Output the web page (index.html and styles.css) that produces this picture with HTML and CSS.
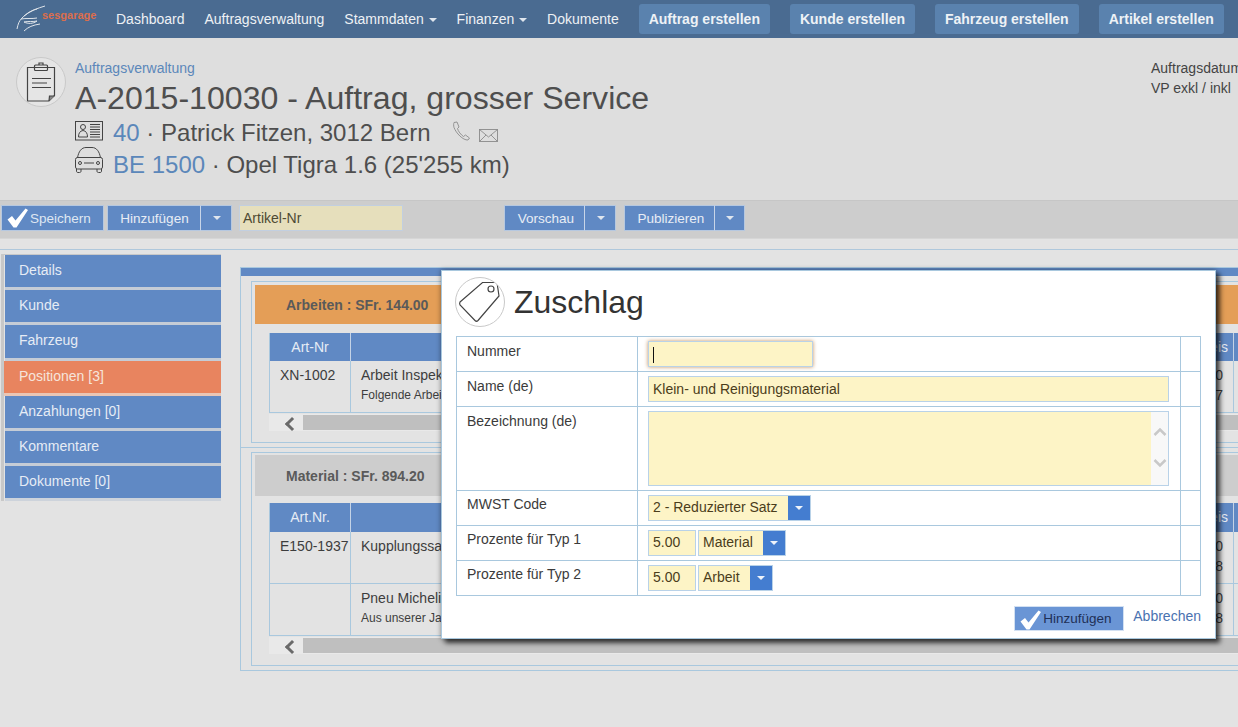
FILE: index.html
```html
<!DOCTYPE html>
<html lang="de">
<head>
<meta charset="utf-8">
<title>Zuschlag</title>
<link rel="stylesheet" href="styles.css">
</head>
<body>
<nav class="nav">
  <a class="logo">
    <svg class="logo-mark" width="46" height="32" viewBox="0 0 46 32" fill="none" stroke="#dfe4ea" stroke-width="1"><path d="M29 2C22 4 14 7 8 12"/><path d="M21 5C16 6 11 9 6 14C3 17 2 20 1 25"/><path d="M5 15C10 14 16 15 21 14"/><path d="M8 18C12 17 17 18 21 17C17 20 12 20 8 18Z"/><path d="M8 27C12 23 17 21 24 20"/></svg>
    <span class="logo-text">sesgarage</span>
  </a>
  <a class="nav-link">Dashboard</a>
  <a class="nav-link">Auftragsverwaltung</a>
  <a class="nav-link">Stammdaten <i class="caret"></i></a>
  <a class="nav-link">Finanzen <i class="caret"></i></a>
  <a class="nav-link">Dokumente</a>
  <a class="nav-btn first">Auftrag erstellen</a>
  <a class="nav-btn">Kunde erstellen</a>
  <a class="nav-btn">Fahrzeug erstellen</a>
  <a class="nav-btn">Artikel erstellen</a>
</nav>

<header class="head">
  <div class="round-icon">
    <svg width="50" height="50" viewBox="0 0 50 50" fill="none" stroke="#444" stroke-width="1.200"><path d="M11.500 10.500H38.500V38.500L33 44H11.500Z"/><rect x="18.500" y="8" width="13" height="5.500" rx="1"/><path d="M23 8V6H27V8"/><path d="M16 21.500H35M16 26H31M16 30.500H35"/><path d="M33 44L33.500 39H38.500" fill="#888"/></svg>
  </div>
  <div class="head-main">
    <a class="crumb">Auftragsverwaltung</a>
    <h1 class="title">A-2015-10030 - Auftrag, grosser Service</h1>
    <div class="sub sub-a">
      <svg class="sub-icon id" width="28" height="20" viewBox="0 0 28 20" fill="none" stroke="#444"><rect x="0.500" y="0.500" width="27" height="18.500"/><circle cx="8" cy="6" r="2.500"/><path d="M3.500 16C3.500 12 5 10 8 9.500C11 10 12.500 12 12.500 16Z"/><path d="M15 3.500H25M15 6H25M15 8.500H25M15 11H25M15 13.500H25M15 16H25"/></svg>
      <a class="num">40</a><span> · Patrick Fitzen, 3012 Bern</span>
      <svg class="phone" width="20" height="20" viewBox="0 0 20 20" fill="none" stroke="#8b8b8b" stroke-width="0.9"><path d="M3 1.500L6 1L8 6L6.500 7.500C7 10 10 14 12.500 15.500L14.500 14L18.500 17L17 19C12 19.500 5 12 3 6.500C2.500 4.500 2.500 3 3 1.500Z"/></svg>
      <svg class="mail" width="19" height="13" viewBox="0 0 19 13" fill="none" stroke="#8b8b8b" stroke-width="0.9"><rect x="0.500" y="0.500" width="18" height="12"/><path d="M0.500 0.500L9.500 8L18.500 0.500M0.500 12.500L7 6M18.500 12.500L12 6"/></svg>
    </div>
    <div class="sub sub-b">
      <svg class="sub-icon car" width="28" height="26" viewBox="0 0 28 26" fill="none" stroke="#444"><path d="M2.500 11C3.500 4.500 6.500 0.500 11 0.500H17C21.500 0.500 24.500 4.500 25.500 11"/><rect x="0.500" y="10.500" width="27" height="11.500" rx="2"/><path d="M1.500 22V24C1.500 25 2 25.500 3 25.500H4.500C5.500 25.500 6 25 6 24V22M22 22V24C22 25 22.500 25.500 23.500 25.500H25C26 25.500 26.500 25 26.500 24V22"/><circle cx="5" cy="16" r="1.500"/><circle cx="23" cy="16" r="1.500"/><path d="M9 16H19"/></svg>
      <a class="num">BE 1500</a><span> · Opel Tigra 1.6 (25'255 km)</span>
    </div>
  </div>
  <div class="head-side">
    <div>Auftragsdatum</div>
    <div>VP exkl / inkl</div>
  </div>
</header>

<div class="toolbar">
  <a class="tbtn save">
    <svg width="22" height="20" viewBox="0 0 22 20"><path d="M0.500 11.500L5 8L8.500 12.500L18.500 0.500L21 2L9.500 19.500H6.500Z" fill="#fff"/></svg>
    Speichern
  </a>
  <div class="split add"><a class="tbtn main">Hinzufügen</a><a class="tbtn drop"><i class="caret"></i></a></div>
  <div class="art-input">Artikel-Nr</div>
  <div class="split vorschau"><a class="tbtn main">Vorschau</a><a class="tbtn drop"><i class="caret"></i></a></div>
  <div class="split publ"><a class="tbtn main">Publizieren</a><a class="tbtn drop"><i class="caret"></i></a></div>
</div>

<main class="content">
  <aside class="side">
    <a class="side-item">Details</a>
    <a class="side-item">Kunde</a>
    <a class="side-item">Fahrzeug</a>
    <a class="side-item active">Positionen [3]</a>
    <a class="side-item">Anzahlungen [0]</a>
    <a class="side-item">Kommentare</a>
    <a class="side-item">Dokumente [0]</a>
  </aside>
  <section class="panel">
    <div class="panel-bar"></div>
    <div class="group">
      <div class="group-box">
        <div class="group-head orange">Arbeiten : SFr. 144.00</div>
        <div class="tbl">
          <div class="row hrow"><div class="c c1">Art-Nr</div><div class="c c2"></div><div class="c c3">Preis</div><div class="c c4"></div></div>
          <div class="row brow"><div class="c c1">XN-1002</div><div class="c c2"><div>Arbeit Inspektion</div><small>Folgende Arbeiten</small></div><div class="c c3"><div>0</div><div>7</div></div><div class="c c4"></div></div>
        </div>
        <div class="hscroll"><span class="chev"></span><span class="thumb"></span></div>
      </div>
    </div>
    <div class="group second">
      <div class="group-box">
        <div class="group-head grey">Material : SFr. 894.20</div>
        <div class="tbl">
          <div class="row hrow"><div class="c c1">Art.Nr.</div><div class="c c2"></div><div class="c c3">Preis</div><div class="c c4"></div></div>
          <div class="row brow"><div class="c c1">E150-1937</div><div class="c c2"><div>Kupplungssatz</div></div><div class="c c3"><div>0</div><div>8</div></div><div class="c c4"></div></div>
          <div class="row brow"><div class="c c1"></div><div class="c c2"><div>Pneu Michelin</div><small>Aus unserer Jahresaktion</small></div><div class="c c3"><div>0</div><div>8</div></div><div class="c c4"></div></div>
        </div>
        <div class="hscroll"><span class="chev"></span><span class="thumb"></span></div>
      </div>
    </div>
  </section>
</main>

<div class="modal">
  <div class="modal-head">
    <div class="round-icon tag">
      <svg width="50" height="50" viewBox="0 0 50 50" fill="none" stroke="#444" stroke-width="1.200"><path d="M5 25L27.500 5.500L42 5.500L44 19L23 43.500C22 44.500 21 44.500 20 43.500L5 28C4.500 27 4.500 26 5 25Z"/><circle cx="36" cy="12" r="3"/></svg>
    </div>
    <h2 class="modal-title">Zuschlag</h2>
  </div>
  <div class="form">
    <div class="f-row r35"><div class="lab">Nummer</div><div class="val"><div class="inp focus"><i class="cursor"></i></div></div><div class="end"></div></div>
    <div class="f-row r35"><div class="lab">Name (de)</div><div class="val"><div class="inp wide">Klein- und Reinigungsmaterial</div></div><div class="end"></div></div>
    <div class="f-row r84"><div class="lab">Bezeichnung (de)</div><div class="val"><div class="area"><div class="area-fill"></div><div class="area-scroll"><svg width="14" height="42" viewBox="0 0 14 42" fill="none" stroke="#c8c8c8" stroke-width="2.500"><path d="M1.500 8L7 2.500L12.500 8M1.500 33L7 38.500L12.500 33"/></svg></div></div></div><div class="end"></div></div>
    <div class="f-row r35 tight"><div class="lab">MWST Code</div><div class="val"><div class="sel s-mwst"><span class="sel-txt">2 - Reduzierter Satz</span><span class="sel-btn"><i class="caret"></i></span></div></div><div class="end"></div></div>
    <div class="f-row r35 tight"><div class="lab">Prozente für Typ 1</div><div class="val"><div class="inp num-inp">5.00</div><div class="sel s-mat"><span class="sel-txt">Material</span><span class="sel-btn"><i class="caret"></i></span></div></div><div class="end"></div></div>
    <div class="f-row r35 tight last"><div class="lab">Prozente für Typ 2</div><div class="val"><div class="inp num-inp">5.00</div><div class="sel s-arb"><span class="sel-txt">Arbeit</span><span class="sel-btn"><i class="caret"></i></span></div></div><div class="end"></div></div>
  </div>
  <div class="modal-foot">
    <a class="add-btn">
      <svg width="22" height="20" viewBox="0 0 22 20"><path d="M0.500 11.500L5 8L8.500 12.500L18.500 0.500L21 2L9.500 19.500H6.500Z" fill="#fff"/></svg>
      Hinzufügen
    </a>
    <a class="cancel">Abbrechen</a>
  </div>
</div>
</body>
</html>
```
FILE: styles.css
```css
* { box-sizing: border-box; }
html, body { margin: 0; height: 727px; overflow: hidden; }
body { position: relative; background: #e3e3e3; font-family: "Liberation Sans", Arial, sans-serif; font-size: 14px; color: #3d3d3d; }
i { display: inline-block; font-style: normal; }
.caret { width: 0; height: 0; border-left: 4px solid transparent; border-right: 4px solid transparent; border-top: 4px solid #dfe6ee; vertical-align: 2px; margin-left: 1px; }

.nav { height: 38px; background: #4a6b91; display: flex; align-items: center; padding-left: 16px; color: #eef1f5; }
.logo { position: relative; width: 80px; height: 32px; display: block; margin-right: 20px; flex: none; }
.logo-mark { position: absolute; left: 0; top: 1px; }
.logo-text { position: absolute; left: 26px; top: 6px; font-size: 11px; font-weight: bold; color: #dc6e4d; }
.nav-link { margin-right: 20px; white-space: nowrap; }
.nav-btn { height: 30px; line-height: 30px; padding: 0 10px; margin-left: 20px; background: #5a82ae; border-radius: 3px; font-weight: bold; white-space: nowrap; color: #eef2f6; flex: none; }
.nav-btn.first { margin-left: 0; }

.head { height: 162px; background: #dedede; display: flex; padding: 19px 0 0 16px; position: relative; }
.round-icon { width: 50px; height: 50px; border-radius: 50%; border: 1px solid #c9c9c9; background: #e5e5e5; flex: none; position: relative; overflow: hidden; }
.round-icon svg { position: absolute; left: -1px; top: -1px; }
.head-main { margin-left: 9px; flex: 1; }
.crumb { display: block; color: #5b87ba; line-height: 20px; margin-top: 1px; }
.title { margin: 0; font-weight: normal; font-size: 32.100px; line-height: 40px; color: #4e4e4e; white-space: nowrap; }
.sub { font-size: 24px; color: #4e4e4e; display: flex; align-items: center; white-space: pre; position: relative; }
.sub-a { height: 30px; }
.sub-b { height: 34px; }
.sub-icon { margin-right: 10px; flex: none; }
.sub-icon.id { margin-top: -4px; }
.sub-icon.car { margin-top: -10px; }
.num { color: #5b87ba; }
.phone { margin: -4px 0 0 20px; flex: none; }
.mail { margin-left: 8px; margin-top: 5px; flex: none; }
.head-side { position: absolute; left: 1151px; top: 20px; white-space: nowrap; line-height: 20px; color: #444; }

.toolbar { height: 39px; background: #cdcdcd; border-top: 1px solid #c6c6c6; border-bottom: 1px solid #d6d6d6; display: flex; align-items: flex-start; padding: 4px 0 0 1px; }
.tbtn { height: 26px; background: #6089c4; color: #e8edf5; display: flex; align-items: center; justify-content: center; font-size: 13.500px; border: 1px solid #b6c8e0; }
.save { width: 103px; padding-left: 1px; justify-content: flex-start; color: #dfe7f2; }
.save svg { margin-left: 4px; margin-right: 1px; flex: none; }
.split { display: flex; }
.split .main { border-right: 1px solid #c8d5e8; }
.split .drop { width: 31px; border-left: 0; }
.add { margin-left: 3px; }
.add .main { width: 94px; padding-left: 1px; }
.art-input { width: 164px; height: 26px; margin-left: 7px; background: #e6dfbc; border: 1px solid #c2cfe0; color: #4e4a33; line-height: 24px; padding-left: 3px; }
.vorschau { margin-left: 101px; }
.vorschau .main { width: 81px; padding-left: 3px; }
.publ { margin-left: 8px; }
.publ .main { width: 91px; padding-left: 3px; }
.publ .drop { width: 30px; }

.content { position: relative; display: flex; margin-top: 10px; border-top: 1px solid #afc8dc; height: 478px; padding: 4px 0 0 1px; overflow: hidden; align-items: flex-start; }
.side { width: 220px; flex: none; border-left: 3px solid #c8c8c8; border-top: 1px solid #c8c8c8; }
.side-item { display: block; height: 35.200px; line-height: 31px; padding-left: 14px; background: #6089c4; color: #e6ecf5; border-bottom: 3px solid #c5ccd6; margin-left: 1px; }
.side-item:last-child { border-bottom-color: #cdd3db; }
.side-item.active { background: #e8845f; margin-left: 0; padding-left: 15px; color: #f6e4dc; border-bottom-color: #e9c6b6; }

.panel { margin: 13px 0 0 19px; flex: 1; height: 404px; border: 1px solid #a9c8de; border-right: 0; min-width: 0; }
.panel-bar { height: 8px; background: #6089c4; }
.group { height: 172px; padding: 5px 0 4px 10px; border-bottom: 1px solid #a9c8de; }
.group.second { height: 222px; border-bottom: 0; padding-top: 4px; }
.group-box { height: 100%; border: 1px solid #a9c8de; border-right: 0; padding: 3px 0 0 3px; }
.group-head { line-height: 40px; padding-left: 31px; font-weight: bold; color: #5a5a5a; font-size: 14px; }
.orange { background: #e49e57; height: 39px; }
.grey { background: #cdcdcd; height: 41px; line-height: 42px; margin-top: -1px; }
.tbl { margin: 9px 0 0 14px; border-left: 1px solid #a9c8de; }
.grey + .tbl { margin-top: 7px; }
.row { display: flex; border-bottom: 1px solid #a9c8de; }
.hrow { height: 29px; background: #6089c4; color: #e6ecf5; line-height: 29px; text-align: center; border-bottom: 0; }
.orange + .tbl .hrow { height: 28px; }
.brow { height: 52px; line-height: 20px; }
.c { border-right: 1px solid #a9c8de; flex: none; }
.hrow .c { border-right-color: #c4d3e6; }
.c1 { width: 81px; text-align: left; padding: 4px 0 0 10px; }
.hrow .c1 { padding: 0; text-align: center; }
.c2 { width: 816px; padding: 4px 0 0 10px; text-align: left; }
.c2 small { font-size: 12px; display: block; }
.c3 { width: 67px; text-align: right; padding: 4px 10px 0 0; }
.c4 { width: 20px; }
.hrow .c2 { padding-top: 0; }
.hrow .c3 { padding: 0 5px 0 0; }
.hscroll { height: 17px; margin: 1px 0 0 14px; background: #e9e9e9; display: flex; align-items: center; }
.chev { width: 34px; flex: none; position: relative; height: 100%; }
.chev::before { content: ""; position: absolute; left: 18px; top: 4.500px; width: 7px; height: 7px; border-left: 3px solid #6a6a6a; border-bottom: 3px solid #6a6a6a; transform: rotate(45deg); }
.thumb { flex: 1; height: 15px; background: #bfbfbf; }

.modal { position: absolute; left: 441px; top: 270px; width: 775px; height: 369px; background: #fff; border: 1px solid #a9c8de; box-shadow: 4px 4px 5px rgba(0,0,0,0.7), 0 0 5px rgba(0,0,0,0.4); padding: 6px 14px 0 13px; }
.modal-head { display: flex; align-items: center; height: 50px; }
.round-icon.tag { background: #fff; }
.modal-title { margin: 0 0 0 9px; font-weight: normal; font-size: 32px; color: #333; }
.form { margin: 9px 0 0 1px; border: 1px solid #a9c8de; }
.f-row { display: flex; border-bottom: 1px solid #a9c8de; }
.r35 { height: 35px; }
.f-row.last { height: 34px; border-bottom: 0; }
.r84 { height: 84px; }
.lab { width: 181px; flex: none; border-right: 1px solid #a9c8de; padding: 4px 0 0 10px; line-height: 20px; color: #3b3b3b; }
.tight .lab { padding-top: 3px; }
.val { width: 542px; flex: none; padding: 4px 0 0 10px; display: flex; gap: 2px; align-items: flex-start; }
.end { flex: 1; border-left: 1px solid #a9c8de; }
.inp { height: 26px; background: #fdf4c6; border: 1px solid #b9d2e8; line-height: 24px; padding-left: 4px; color: #4b3d1b; }
.inp.focus { width: 165px; box-shadow: 0 0 4px #c8935f; position: relative; }
.cursor { position: absolute; left: 4px; top: 5px; width: 1px; height: 16px; background: #111; }
.inp.wide { width: 521px; }
.num-inp { width: 48px; }
.area { width: 521px; height: 75px; border: 1px solid #b9d2e8; display: flex; }
.area-fill { flex: 1; background: #fdf4c6; }
.area-scroll { width: 17px; background: #f8f8f8; padding: 15px 0 0 2px; }
.area-scroll svg { display: block; }
.sel { height: 26px; display: flex; background: #fdf4c6; border: 1px solid #b9d2e8; line-height: 24px; color: #4b3d1b; }
.tight .inp, .tight .sel { line-height: 22px; }
.sel-txt { flex: 1; padding-left: 4px; white-space: nowrap; }
.sel-btn { width: 22px; background: #447dd0; display: flex; align-items: center; justify-content: center; flex: none; }
.sel-btn .caret { margin: 0; border-top-color: #eef3fa; }
.s-mwst { width: 163px; }
.s-mat { width: 88px; }
.s-arb { width: 75px; }

.modal-foot { display: flex; justify-content: flex-end; align-items: flex-start; padding: 10px 0 0 0; }
.add-btn { width: 110px; height: 25px; background: #6a95d5; border: 1px solid #d2e0f2; display: flex; align-items: center; font-size: 13.500px; color: #1f2f55; padding-left: 5px; }
.add-btn svg { flex: none; margin: 2px 1px 0 0; }
.cancel { margin-left: 9px; color: #4a72b0; line-height: 20px; }
```
